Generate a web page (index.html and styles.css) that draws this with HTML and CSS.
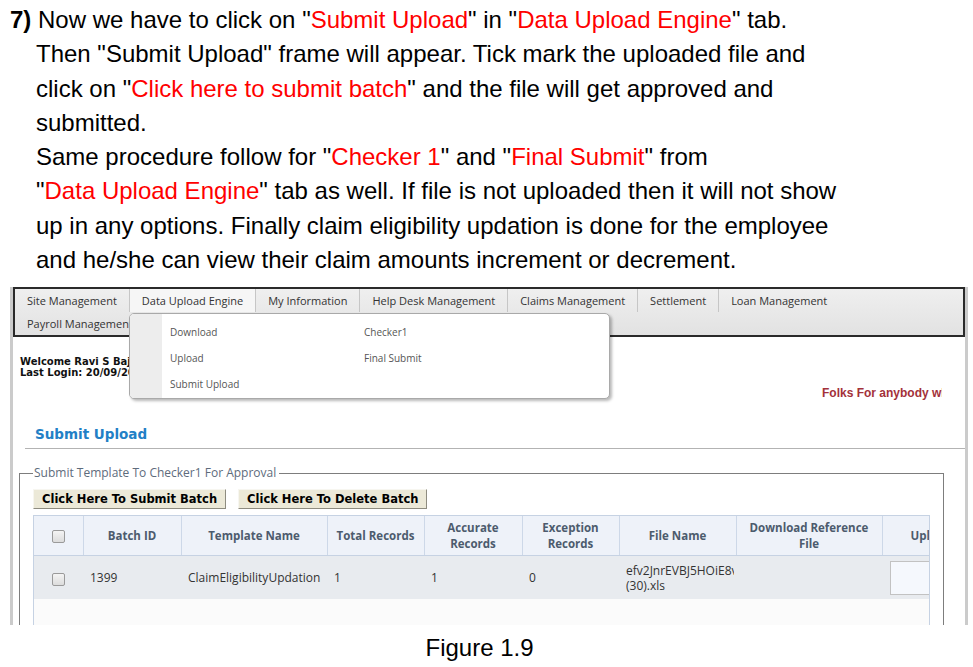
FILE: index.html
```html
<!DOCTYPE html>
<html lang="en">
<head>
<meta charset="utf-8">
<title>Figure 1.9 - Submit Upload</title>
<link rel="stylesheet" href="styles.css">
</head>
<body>
<div class="instructions">
  <div class="line first"><b>7)</b> Now we have to click on "<span class="red">Submit Upload</span>" in "<span class="red">Data Upload Engine</span>" tab.</div>
  <div class="line">Then "Submit Upload" frame will appear. Tick mark the uploaded file and</div>
  <div class="line">click on "<span class="red">Click here to submit batch</span>" and the file will get approved and</div>
  <div class="line">submitted.</div>
  <div class="line">Same procedure follow for "<span class="red">Checker 1</span>" and "<span class="red">Final Submit</span>" from</div>
  <div class="line">"<span class="red">Data Upload Engine</span>" tab as well. If file is not uploaded then it will not show</div>
  <div class="line">up in any options. Finally claim eligibility updation is done for the employee</div>
  <div class="line">and he/she can view their claim amounts increment or decrement.</div>
</div>

<div class="shot">
  <nav class="menu">
    <div class="menu-row">
      <span class="menu-item">Site Management</span>
      <span class="menu-item active">Data Upload Engine</span>
      <span class="menu-item">My Information</span>
      <span class="menu-item">Help Desk Management</span>
      <span class="menu-item">Claims Management</span>
      <span class="menu-item">Settlement</span>
      <span class="menu-item last">Loan Management</span>
    </div>
    <div class="menu-row">
      <span class="menu-item">Payroll Management</span>
    </div>
  </nav>

  <div class="dropdown">
    <div class="dropdown-strip"></div>
    <div class="dropdown-col">
      <span class="dropdown-item">Download</span>
      <span class="dropdown-item">Upload</span>
      <span class="dropdown-item">Submit Upload</span>
    </div>
    <div class="dropdown-col">
      <span class="dropdown-item">Checker1</span>
      <span class="dropdown-item">Final Submit</span>
    </div>
  </div>

  <div class="page">
    <div class="welcome">Welcome Ravi S Bajaj<br>Last Login: 20/09/2016 11:42:10</div>
    <div class="notice-row">
      <div class="notice">Folks For anybody who wants to upload the data</div>
    </div>
    <h2 class="section-title">Submit Upload</h2>

    <fieldset class="panel">
      <legend class="panel-legend">Submit Template To Checker1 For Approval</legend>
      <div class="btns">
        <button class="btn" type="button">Click Here To Submit Batch</button>
        <button class="btn" type="button">Click Here To Delete Batch</button>
      </div>
      <div class="grid-wrap">
        <table class="grid">
          <colgroup>
            <col class="c-chk"><col class="c-id"><col class="c-tpl"><col class="c-tot"><col class="c-acc"><col class="c-exc"><col class="c-file"><col class="c-ref"><col class="c-upl">
          </colgroup>
          <thead>
            <tr>
              <th><span class="chk"></span></th>
              <th>Batch ID</th>
              <th>Template Name</th>
              <th>Total Records</th>
              <th>Accurate<br>Records</th>
              <th>Exception<br>Records</th>
              <th>File Name</th>
              <th>Download Reference<br>File</th>
              <th>Upload Reference File</th>
            </tr>
          </thead>
          <tbody>
            <tr class="data">
              <td class="center"><span class="chk"></span></td>
              <td>1399</td>
              <td>ClaimEligibilityUpdation</td>
              <td>1</td>
              <td>1</td>
              <td>0</td>
              <td><div class="fname">efv2JnrEVBJ5HOiE8vQx2kLm (30).xls</div></td>
              <td></td>
              <td><span class="upl-box"></span></td>
            </tr>
          </tbody>
        </table>
      </div>
    </fieldset>
  </div>
</div>

<div class="caption">Figure 1.9</div>
</body>
</html>
```

FILE: styles.css
```css
html, body {
  margin: 0;
  padding: 0;
  background: #ffffff;
}

body {
  font-family: "Liberation Sans", Arial, sans-serif;
  color: #000;
}

/* ---------- instruction text ---------- */
.instructions {
  padding-top: 3px;
  font-size: 24px;
  line-height: 34.3px;
  color: #000;
}

.line {
  white-space: nowrap;
  padding-left: 36px;
}

.line.first {
  padding-left: 10px;
}

.red {
  color: #ff0000;
}

/* ---------- screenshot frame ---------- */
.shot {
  position: relative;
  margin: 10px 0 0 10px;
  width: 952px;
  height: 338px;
  overflow: hidden;
  border-left: 3px solid #cbcbcb;
  border-right: 3px solid #cbcbcb;
  font-family: "Open Sans", "Noto Sans", sans-serif;
}

/* ---------- nav menu ---------- */
.menu {
  border: 2px solid #2a2a2a;
  background: linear-gradient(#efefef, #e2e2e2);
}

.menu-row {
  display: flex;
  height: 23px;
}

.menu-item {
  display: flex;
  align-items: center;
  padding: 0 12px 0 12px;
  border-right: 1px solid #c6c6c6;
  font-size: 11px;
  color: #333;
  white-space: nowrap;
}

.menu-item.active {
  background: #f6f6f6;
}

.menu-item.last,
.menu-row + .menu-row .menu-item {
  border-right: none;
}

/* ---------- dropdown ---------- */
.dropdown {
  position: absolute;
  left: 116px;
  top: 26px;
  width: 479px;
  height: 84px;
  display: flex;
  background: #fff;
  border: 1px solid #a9a9a9;
  border-radius: 5px;
  box-shadow: 2px 2px 3px rgba(0, 0, 0, 0.28);
  overflow: hidden;
}

.dropdown-strip {
  width: 32px;
  background: #ededed;
}

.dropdown-col {
  display: flex;
  flex-direction: column;
  padding: 5px 0 0 8px;
  width: 186px;
}

.dropdown-item {
  height: 26px;
  line-height: 26px;
  font-size: 10px;
  color: #555;
}

/* ---------- page ---------- */
.page {
  padding-left: 7px;
}

.welcome {
  margin-top: 19px;
  font-family: "DejaVu Sans", Verdana, sans-serif;
  font-weight: bold;
  font-size: 10px;
  line-height: 11px;
  color: #111;
  white-space: nowrap;
}

.notice-row {
  margin-top: 8px;
  display: flex;
}

.notice {
  margin-left: 802px;
  width: 120px;
  overflow: hidden;
  white-space: nowrap;
  font-family: "Liberation Sans", Arial, sans-serif;
  font-weight: bold;
  font-size: 12px;
  line-height: 14px;
  color: #a3313a;
}

.section-title {
  margin: 26px 0 0 5px;
  padding: 0 0 6px 10px;
  border-bottom: 1px solid #b3b3b3;
  font-family: "DejaVu Sans", Verdana, sans-serif;
  font-size: 13.5px;
  line-height: 16px;
  font-weight: bold;
  color: #2280c6;
}

/* ---------- fieldset panel ---------- */
.panel {
  box-sizing: border-box;
  margin: 16px 0 0 -1px;
  width: 925px;
  padding: 8px 13px 0 13px;
  border: 1px solid #7d7d7d;
  min-width: 0;
}

.panel-legend {
  padding: 0 3px 0 1px;
  font-size: 12px;
  line-height: 16px;
  color: #5e6b7c;
}

.btns {
  display: flex;
  gap: 12px;
}

.btn {
  height: 20px;
  padding: 0 8px;
  margin: 0;
  background: #ece9d8;
  border: 1px solid;
  border-color: #f7f6f0 #8e8c80 #8e8c80 #f7f6f0;
  font-family: "DejaVu Sans", Verdana, sans-serif;
  font-weight: bold;
  font-size: 11.5px;
  color: #000;
}

/* ---------- grid ---------- */
.grid-wrap {
  margin-top: 6px;
  height: 140px;
  overflow: hidden;
  border: 1px solid #c6d2e3;
  background: #fbfbfb;
}

.grid {
  table-layout: fixed;
  width: 1030px;
  border-collapse: collapse;
}

.c-chk { width: 49px; }
.c-id { width: 98px; }
.c-tpl { width: 146px; }
.c-tot { width: 97px; }
.c-acc { width: 98px; }
.c-exc { width: 97px; }
.c-file { width: 117px; }
.c-ref { width: 146px; }
.c-upl { width: 182px; }

.grid th {
  height: 39px;
  padding: 0 4px;
  background: #eef2f9;
  border-right: 1px solid #cdd8e8;
  border-bottom: 1px solid #c6d2e3;
  font-size: 11.5px;
  line-height: 16px;
  font-weight: bold;
  color: #4c5b6d;
  text-align: center;
  vertical-align: middle;
  white-space: nowrap;
  overflow: hidden;
}

.grid .data td {
  height: 43px;
  padding: 0 0 0 7px;
  background: #e8ebef;
  font-size: 12px;
  line-height: 15px;
  color: #333;
  vertical-align: middle;
  white-space: nowrap;
}

.grid .data td.center {
  padding: 0;
  text-align: center;
}

.fname {
  width: 108px;
  overflow: hidden;
  white-space: normal;
  word-break: keep-all;
}

.chk {
  display: inline-block;
  width: 11px;
  height: 11px;
  vertical-align: middle;
  border: 1px solid #9a9a9a;
  border-radius: 2px;
  background: linear-gradient(#f4f4f4, #dcdcdc);
}

.upl-box {
  display: block;
  margin-left: 1px;
  width: 90px;
  height: 32px;
  border: 1px solid #c2c2c2;
  background: #f5f8fd;
}

/* ---------- caption ---------- */
.caption {
  margin-top: 9px;
  padding-right: 14px;
  text-align: center;
  font-size: 24px;
  line-height: 28px;
  color: #000;
}
```
